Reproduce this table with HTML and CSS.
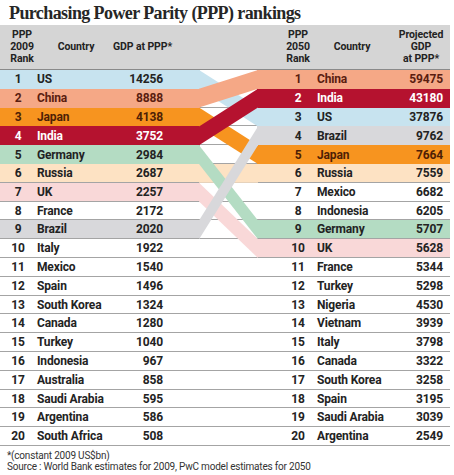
FILE: index.html
```html
<!DOCTYPE html>
<html lang="en">
<head>
  <meta charset="UTF-8">
  <meta name="viewport" content="width=device-width, initial-scale=1.0">
  <title>Purchasing Power Parity (PPP) rankings</title>
  <link rel="stylesheet" href="styles.css">
</head>
<body>
  <div class="chart">
    <h1 class="title">Purchasing Power Parity (PPP) rankings</h1>
    <div class="board">
      <div class="head">
        <div class="head-left">
          <span class="h-rank">PPP<br>2009<br>Rank</span>
          <span class="h-country">Country</span>
          <span class="h-gdp">GDP at PPP*</span>
        </div>
        <div class="head-gap"></div>
        <div class="head-right">
          <span class="h-rank">PPP<br>2050<br>Rank</span>
          <span class="h-country">Country</span>
          <span class="h-gdp">Projected<br>GDP<br>at PPP*</span>
        </div>
      </div>
      <div class="rows" id="rows"></div>
      <svg class="ribbons" viewBox="0 0 57 376" preserveAspectRatio="none">
        <polygon class="blue" points="-1,0 58,37.6 58,56.4 -1,18.8"/>
        <polygon class="peach" points="-1,94 58,94 58,112.8 -1,112.8"/>
        <polygon class="orange" points="-1,37.6 58,75.2 58,94 -1,56.4"/>
        <polygon class="green" points="-1,75.2 58,150.4 58,169.2 -1,94"/>
        <polygon class="pink" points="-1,112.8 58,169.2 58,188 -1,131.6"/>
        <polygon class="salmon" points="-1,18.8 58,0 58,18.8 -1,37.6"/>
        <polygon class="crimson" points="-1,56.4 58,18.8 58,37.6 -1,75.2"/>
        <polygon class="gray" points="-1,150.4 58,56.4 58,75.2 -1,169.2"/>
      </svg>
    </div>
    <p class="note">*(constant 2009 US$bn)<br>Source : World Bank estimates for 2009, PwC model estimates for 2050</p>
  </div>
  <script>
    const rank2009 = [
      ['US', 14256, 'blue'], ['China', 8888, 'salmon'], ['Japan', 4138, 'orange'],
      ['India', 3752, 'crimson'], ['Germany', 2984, 'green'], ['Russia', 2687, 'peach'],
      ['UK', 2257, 'pink'], ['France', 2172], ['Brazil', 2020, 'gray'], ['Italy', 1922],
      ['Mexico', 1540], ['Spain', 1496], ['South Korea', 1324], ['Canada', 1280],
      ['Turkey', 1040], ['Indonesia', 967], ['Australia', 858], ['Saudi Arabia', 595],
      ['Argentina', 586], ['South Africa', 508]
    ];
    const rank2050 = [
      ['China', 59475, 'salmon'], ['India', 43180, 'crimson'], ['US', 37876, 'blue'],
      ['Brazil', 9762, 'gray'], ['Japan', 7664, 'orange'], ['Russia', 7559, 'peach'],
      ['Mexico', 6682], ['Indonesia', 6205], ['Germany', 5707, 'green'], ['UK', 5628, 'pink'],
      ['France', 5344], ['Turkey', 5298], ['Nigeria', 4530], ['Vietnam', 3939],
      ['Italy', 3798], ['Canada', 3322], ['South Korea', 3258], ['Spain', 3195],
      ['Saudi Arabia', 3039], ['Argentina', 2549]
    ];

    const rowsElement = document.getElementById('rows');

    function makeSide(side, index, entry) {
      const [country, gdp, tint] = entry;
      const el = document.createElement('div');
      el.className = `side ${side} ${tint || 'plain'} ${index >= 5 ? 'ruled' : ''}`;
      el.innerHTML = `<span class="rank">${index + 1}</span><span class="country">${country}</span><span class="gdp">${gdp}</span>`;
      return el;
    }

    rank2009.forEach((entry, index) => {
      const row = document.createElement('div');
      row.className = 'row';
      row.appendChild(makeSide('left', index, entry));
      const gap = document.createElement('div');
      gap.className = 'gap';
      row.appendChild(gap);
      row.appendChild(makeSide('right', index, rank2050[index]));
      rowsElement.appendChild(row);
    });
  </script>
</body>
</html>
```

FILE: styles.css
```css
:root {
  --head-bg: #d5d5d5;
  --rule: #a4a4a4;
  --ink: #232323;
  --blue: #c7e3ef;
  --salmon: #f5a886;
  --orange: #f7941f;
  --crimson: #b5122f;
  --green: #b4dcc3;
  --peach: #fde2c3;
  --pink: #f9d8d8;
  --gray: #d8d8db;
}
body {
  margin: 0;
  background: white;
  color: var(--ink);
  font-family: Roboto, 'Liberation Sans', sans-serif;
}
.chart {
  width: 454px;
}
.title {
  margin: 0;
  height: 25px;
  padding: 3px 0 0 9px;
  box-sizing: border-box;
  font-family: 'Liberation Serif', serif;
  font-size: 18px;
  line-height: 20px;
  letter-spacing: -0.6px;
  font-weight: bold;
  color: #262626;
}
.board {
  position: relative;
  width: 450px;
}
.head {
  display: flex;
  height: 45px;
  background: var(--head-bg);
  border-bottom: 1px solid #8a8a8a;
  box-sizing: border-box;
  font-weight: bold;
  font-size: 10.5px;
  line-height: 12px;
  letter-spacing: -0.1px;
  white-space: nowrap;
}
.head-left, .head-right {
  display: grid;
  align-items: center;
  text-align: center;
}
.head-left {
  width: 200px;
  grid-template-columns: 44px 64px 1fr;
}
.head-left .h-gdp {
  text-align: left;
  padding-left: 5px;
}
.head-gap {
  width: 57px;
}
.head-right {
  width: 193px;
  padding-left: 23px;
  grid-template-columns: 36px 72px 1fr;
  box-sizing: border-box;
}
.head-right .h-gdp {
  padding-left: 4px;
}
.row {
  display: flex;
  height: 18.8px;
}
.side {
  display: grid;
  align-items: center;
  box-sizing: border-box;
  font-weight: bold;
  font-size: 12px;
  line-height: 18px;
  letter-spacing: -0.15px;
  white-space: nowrap;
}
.side.left {
  width: 200px;
  grid-template-columns: 36px 77px 50px;
  padding-right: 37px;
}
.side.right {
  width: 193px;
  grid-template-columns: 36px 77px 50px;
  padding: 0 7px 0 23px;
}
.rank {
  text-align: center;
}
.country {
  padding-left: 1px;
}
.gdp {
  text-align: right;
}
.gap {
  width: 57px;
  border-bottom: 1px solid var(--rule);
  box-sizing: border-box;
}
.side.ruled {
  border-bottom: 1px solid var(--rule);
}
.side.blue { background: var(--blue); }
.side.salmon { background: var(--salmon); color: #5a1d10; }
.side.orange { background: var(--orange); color: #4e1f06; }
.side.crimson { background: var(--crimson); color: white; }
.side.green { background: var(--green); }
.side.peach { background: var(--peach); }
.side.pink { background: var(--pink); }
.side.gray { background: var(--gray); }
.ribbons {
  position: absolute;
  left: 200px;
  top: 45px;
  width: 57px;
  height: 376px;
  overflow: visible;
}
.ribbons .blue { fill: var(--blue); }
.ribbons .salmon { fill: var(--salmon); }
.ribbons .orange { fill: var(--orange); }
.ribbons .crimson { fill: var(--crimson); }
.ribbons .green { fill: var(--green); }
.ribbons .peach { fill: var(--peach); }
.ribbons .pink { fill: var(--pink); }
.ribbons .gray { fill: var(--gray); }
.note {
  margin: 0;
  padding: 4px 0 0 7px;
  font-size: 10px;
  line-height: 11px;
  letter-spacing: -0.2px;
  color: #333;
  white-space: nowrap;
}
```
